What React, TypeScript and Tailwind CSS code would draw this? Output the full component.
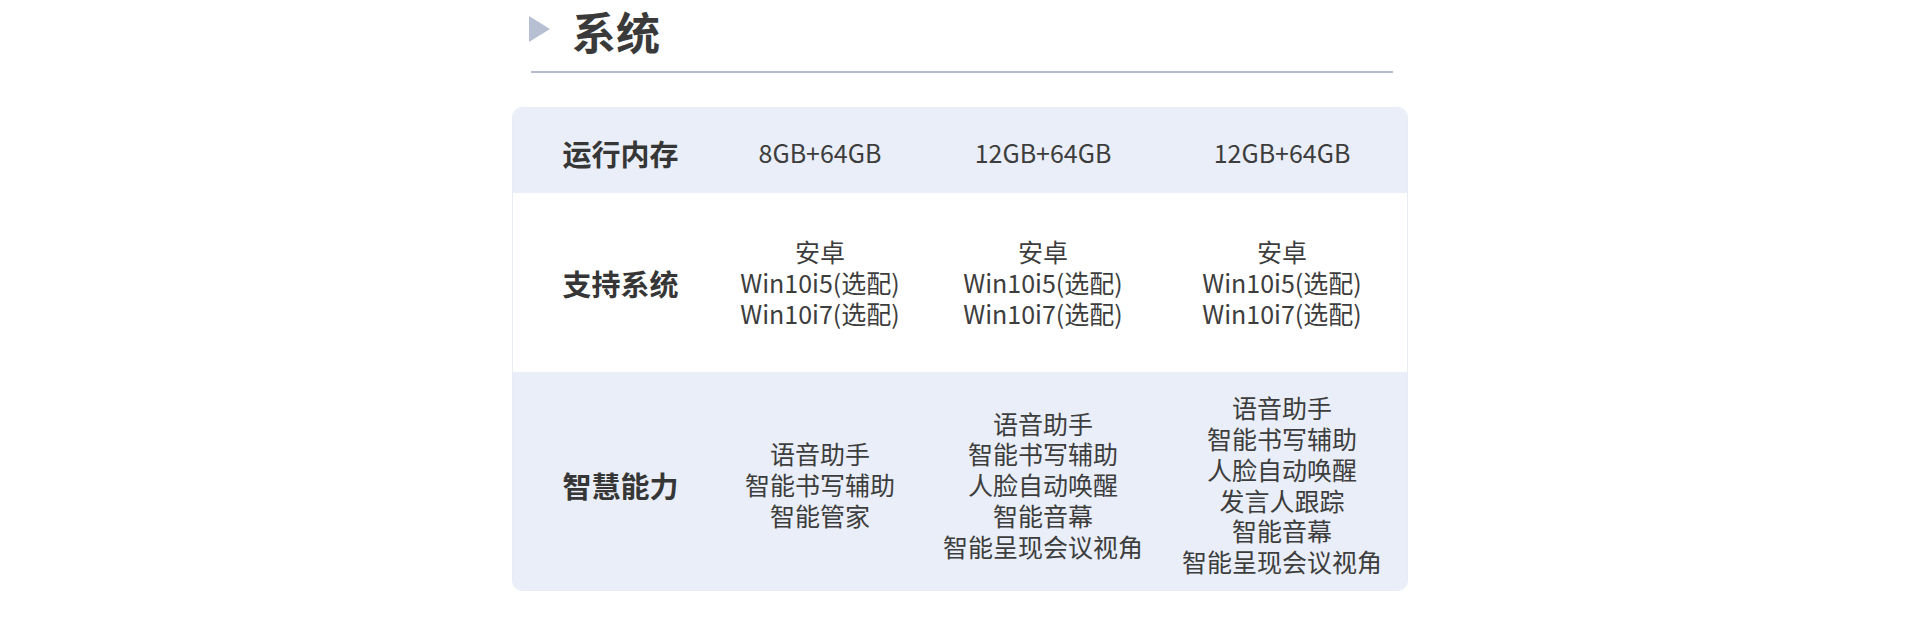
const rows: { label: string; values: string[][]; tone: 'blue' | 'white'; h: string; pad: string }[] = [
  {
    label: '运行内存',
    values: [['8GB+64GB'], ['12GB+64GB'], ['12GB+64GB']],
    tone: 'blue',
    h: 'h-[85px]',
    pad: 'pt-[4px]',
  },
  {
    label: '支持系统',
    values: [
      ['安卓', 'Win10i5(选配)', 'Win10i7(选配)'],
      ['安卓', 'Win10i5(选配)', 'Win10i7(选配)'],
      ['安卓', 'Win10i5(选配)', 'Win10i7(选配)'],
    ],
    tone: 'white',
    h: 'h-[179px]',
    pad: 'pt-0',
  },
  {
    label: '智慧能力',
    values: [
      ['语音助手', '智能书写辅助', '智能管家'],
      ['语音助手', '智能书写辅助', '人脸自动唤醒', '智能音幕', '智能呈现会议视角'],
      ['语音助手', '智能书写辅助', '人脸自动唤醒', '发言人跟踪', '智能音幕', '智能呈现会议视角'],
    ],
    tone: 'blue',
    h: 'h-[218px]',
    pad: 'pt-[7px]',
  },
]

export default function App() {
  return (
    <div className="min-h-[619px] bg-white font-['Noto_Sans_CJK_SC','Noto_Sans',sans-serif] text-[#3d3d3d]">
      <div className="mx-auto w-[896px]">
        {/* section heading */}
        <div className="flex h-[61px] items-center pl-[17px]">
          <svg width="21" height="26" viewBox="0 0 21 26" className="-mt-[4px] shrink-0">
            <polygon points="0,0 21,13 0,26" fill="#b7c0d2" />
          </svg>
          <h2 className="ml-[22px] text-[44px] font-bold leading-none text-[#3a3a3a]">系统</h2>
        </div>
        <div className="ml-[19px] mt-[10px] h-[2px] w-[862px] bg-[#b4bdd0]" />

        {/* spec table */}
        <div className="mt-[34px] overflow-hidden rounded-[10px] border border-[#e8ecf4]">
          {rows.map(row => (
            <div
              key={row.label}
              className={
                'grid grid-cols-[215px_184px_262px_233px] items-center ' +
                row.h +
                (row.tone === 'blue' ? ' bg-[#e9eef8]' : ' bg-white')
              }
            >
              <div className={'text-center text-[29px] font-bold leading-[36px] text-[#363636] ' + row.pad}>
                {row.label}
              </div>
              {row.values.map((lines, i) => (
                <div
                  key={i}
                  className={
                    'flex flex-col items-center text-[25px] leading-[30.7px] ' +
                    row.pad +
                    (i === 2 ? ' pr-[17px]' : '')
                  }
                >
                  {lines.map(l => (
                    <span key={l} className="block h-[30.7px] whitespace-nowrap">
                      {l}
                    </span>
                  ))}
                </div>
              ))}
            </div>
          ))}
        </div>
      </div>
    </div>
  )
}
